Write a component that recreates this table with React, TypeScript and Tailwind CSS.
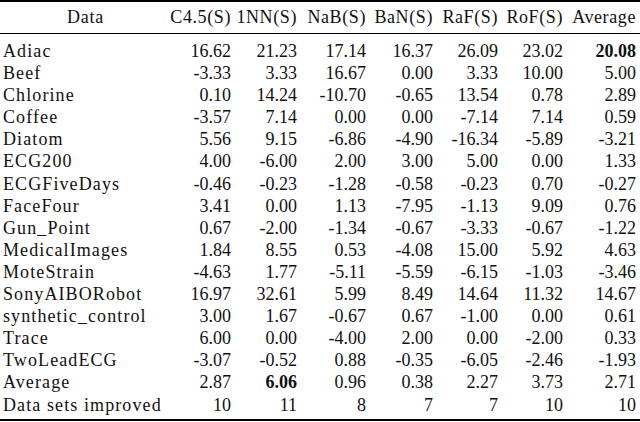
import React from "react";

type Row = { name: string; vals: string[]; bold?: number };

const rows: Row[] = [
  { name: "Adiac", vals: ["16.62", "21.23", "17.14", "16.37", "26.09", "23.02", "20.08"], bold: 6 },
  { name: "Beef", vals: ["-3.33", "3.33", "16.67", "0.00", "3.33", "10.00", "5.00"] },
  { name: "Chlorine", vals: ["0.10", "14.24", "-10.70", "-0.65", "13.54", "0.78", "2.89"] },
  { name: "Coffee", vals: ["-3.57", "7.14", "0.00", "0.00", "-7.14", "7.14", "0.59"] },
  { name: "Diatom", vals: ["5.56", "9.15", "-6.86", "-4.90", "-16.34", "-5.89", "-3.21"] },
  { name: "ECG200", vals: ["4.00", "-6.00", "2.00", "3.00", "5.00", "0.00", "1.33"] },
  { name: "ECGFiveDays", vals: ["-0.46", "-0.23", "-1.28", "-0.58", "-0.23", "0.70", "-0.27"] },
  { name: "FaceFour", vals: ["3.41", "0.00", "1.13", "-7.95", "-1.13", "9.09", "0.76"] },
  { name: "Gun_Point", vals: ["0.67", "-2.00", "-1.34", "-0.67", "-3.33", "-0.67", "-1.22"] },
  { name: "MedicalImages", vals: ["1.84", "8.55", "0.53", "-4.08", "15.00", "5.92", "4.63"] },
  { name: "MoteStrain", vals: ["-4.63", "1.77", "-5.11", "-5.59", "-6.15", "-1.03", "-3.46"] },
  { name: "SonyAIBORobot", vals: ["16.97", "32.61", "5.99", "8.49", "14.64", "11.32", "14.67"] },
  { name: "synthetic_control", vals: ["3.00", "1.67", "-0.67", "0.67", "-1.00", "0.00", "0.61"] },
  { name: "Trace", vals: ["6.00", "0.00", "-4.00", "2.00", "0.00", "-2.00", "0.33"] },
  { name: "TwoLeadECG", vals: ["-3.07", "-0.52", "0.88", "-0.35", "-6.05", "-2.46", "-1.93"] },
  { name: "Average", vals: ["2.87", "6.06", "0.96", "0.38", "2.27", "3.73", "2.71"], bold: 1 },
  { name: "Data sets improved", vals: ["10", "11", "8", "7", "7", "10", "10"] },
];

const headers = ["C4.5(S)", "1NN(S)", "NaB(S)", "BaN(S)", "RaF(S)", "RoF(S)", "Average"];

const grid = "grid grid-cols-[168px_63px_66px_69px_67px_65px_65px_73px]";

export default function App() {
  return (
    <div
      className="w-[640px] h-[422px] bg-white text-[#111] overflow-hidden"
      style={{ fontFamily: '"Liberation Serif", "Times New Roman", serif' }}
    >
      <div className="h-[2px] bg-black" />
      <div className={`${grid} h-[31px] items-center text-[18px] leading-[31px]`}>
        <div className="text-center tracking-[0.8px] pl-[3px]">Data</div>
        {headers.map((h) => (
          <div key={h} className="text-right tracking-[0.6px]">
            {h}
          </div>
        ))}
      </div>
      <div className="h-[1px] bg-black" />
      <div className="pt-[6px] pb-[3.3px]">
        {rows.map((r) => (
          <div key={r.name} className={`${grid} h-[22.1px] text-[18px] leading-[22.1px]`}>
            <div className="pl-[3px] tracking-[1.1px] whitespace-nowrap">{r.name}</div>
            {r.vals.map((v, i) => (
              <div key={i} className={`text-right ${r.bold === i ? "font-bold" : ""}`}>
                {v}
              </div>
            ))}
          </div>
        ))}
      </div>
      <div className="h-[2px] bg-black" />
    </div>
  );
}
